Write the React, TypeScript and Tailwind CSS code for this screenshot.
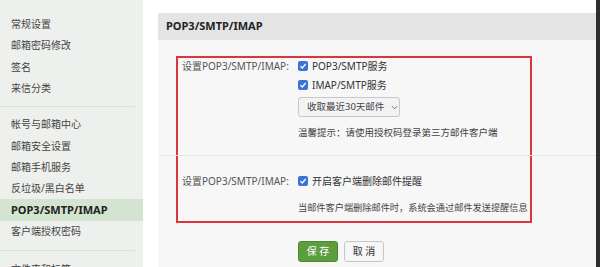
import type { ReactNode } from "react";

const FONT = { fontFamily: '"Noto Sans", "Noto Sans CJK SC", sans-serif' };

function NavItem({ children, active }: { children: ReactNode; active?: boolean }) {
  return (
    <div
      className={`h-[21.3px] flex items-center pl-[11px] whitespace-nowrap ${
        active ? "bg-[#d3e4d0] font-bold text-[11px] text-[#222]" : "text-[10px] text-[#444]"
      }`}
    >
      {children}
    </div>
  );
}

function Check({ children }: { children: ReactNode }) {
  return (
    <div className="flex items-center gap-[4px] text-[10px] leading-[14px] text-[#333] whitespace-nowrap">
      <span className="w-[10px] h-[10px] rounded-[2px] bg-[#3b73d9] flex items-center justify-center">
        <svg width="8" height="8" viewBox="0 0 8 8">
          <path d="M1.5 4.2 L3.3 6 L6.6 2" fill="none" stroke="#fff" strokeWidth="1.3" />
        </svg>
      </span>
      {children}
    </div>
  );
}

export default function App() {
  return (
    <div className="w-[600px] h-[267px] overflow-hidden flex bg-white" style={FONT}>
      <aside className="w-[143px] shrink-0 bg-[#eef0ed] pt-[14px]">
        <NavItem>常规设置</NavItem>
        <NavItem>邮箱密码修改</NavItem>
        <NavItem>签名</NavItem>
        <NavItem>来信分类</NavItem>
        <div className="h-[1px] bg-[#dde0dc] my-[7px] mr-[8px]" />
        <NavItem>帐号与邮箱中心</NavItem>
        <NavItem>邮箱安全设置</NavItem>
        <NavItem>邮箱手机服务</NavItem>
        <NavItem>反垃圾/黑白名单</NavItem>
        <NavItem active>POP3/SMTP/IMAP</NavItem>
        <NavItem>客户端授权密码</NavItem>
        <div className="h-[1px] bg-[#dde0dc] my-[8px] mr-[8px]" />
        <NavItem>文件夹和标签</NavItem>
      </aside>

      <div className="w-[15px] shrink-0" />

      <main className="flex-1 flex flex-col pt-[13px]">
        <div className="h-[27px] bg-[#e4e4e4] flex items-center pl-[8px] text-[11px] font-bold text-[#222]">
          POP3/SMTP/IMAP
        </div>
        <div className="flex-1 bg-[#f7f7f7] pt-[16px]">
          <div className="ml-[18px] w-[356px] h-[167px] border-2 border-[#d9363e] flex flex-col">
            <div className="flex pt-[1px]">
              <div className="w-[120px] pl-[4px] text-[10px] leading-[14px] text-[#555] whitespace-nowrap">设置POP3/SMTP/IMAP:</div>
              <div className="flex flex-col">
                <Check>POP3/SMTP服务</Check>
                <div className="h-[5px]" />
                <Check>IMAP/SMTP服务</Check>
                <div className="mt-[5px] w-[102px] h-[20px] border border-[#c8c8c8] rounded-[3px] bg-[#f3f3f3] flex items-center pl-[8px] gap-[7px] text-[9.5px] text-[#444] whitespace-nowrap">
                  收取最近30天邮件
                  <svg width="7" height="5" viewBox="0 0 7 5">
                    <path d="M0.8 1 L3.5 3.8 L6.2 1" fill="none" stroke="#777" strokeWidth="1" />
                  </svg>
                </div>
                <div className="mt-[9px] text-[9.5px] leading-[14px] text-[#444] whitespace-nowrap">温馨提示：请使用授权码登录第三方邮件客户端</div>
              </div>
            </div>
            <div className="mt-[15px] h-[1px] bg-[#e6e6e6] -ml-[18px] w-[436px]" />
            <div className="flex pt-[18px]">
              <div className="w-[120px] pl-[4px] text-[10px] leading-[14px] text-[#555] whitespace-nowrap">设置POP3/SMTP/IMAP:</div>
              <div className="flex flex-col">
                <Check>开启客户端删除邮件提醒</Check>
                <div className="mt-[13px] text-[9.2px] leading-[14px] text-[#444] whitespace-nowrap">当邮件客户端删除邮件时，系统会通过邮件发送提醒信息</div>
              </div>
            </div>
          </div>
          <div className="ml-[140px] mt-[18px] flex gap-[6px]">
            <button className="w-[40px] h-[21px] rounded-[3px] bg-[#5c9e3e] border border-[#4c8a30] text-white text-[10px]">
              保 存
            </button>
            <button className="w-[40px] h-[21px] rounded-[3px] bg-[#f7f7f7] border border-[#c6c6c6] text-[#333] text-[10px]">
              取 消
            </button>
          </div>
        </div>
      </main>
      <div className="w-[4px] shrink-0 bg-[#2e2e2e]" />
    </div>
  );
}
